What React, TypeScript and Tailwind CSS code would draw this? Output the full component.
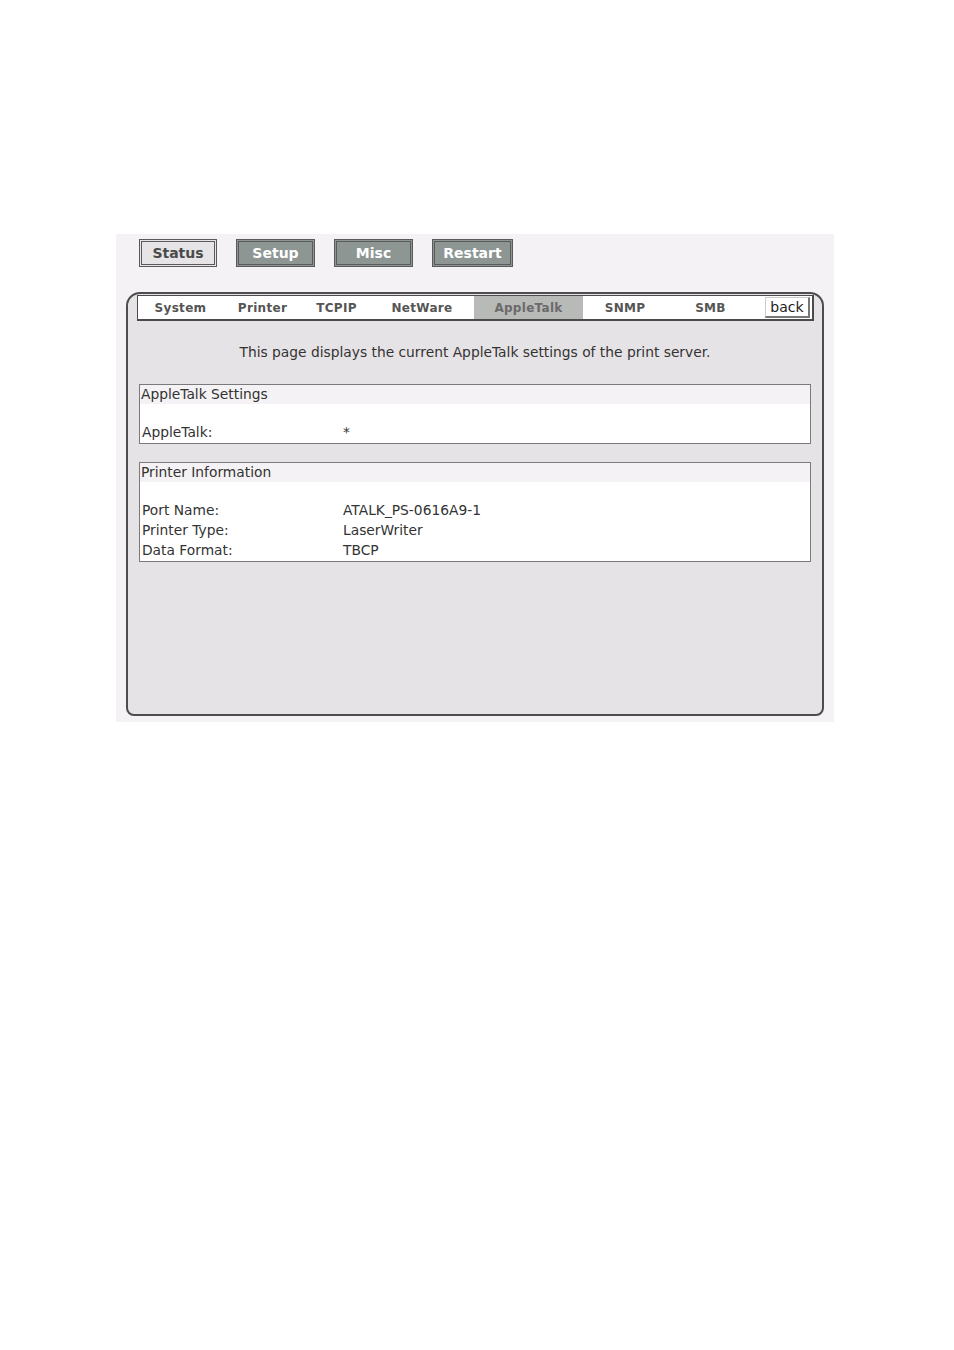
import React from 'react'

const font = { fontFamily: '"DejaVu Sans", Verdana, sans-serif' }

const topButtons = [
  { label: 'Status', w: 'w-[78px]', active: true },
  { label: 'Setup', w: 'w-[79px]', active: false },
  { label: 'Misc', w: 'w-[79px]', active: false },
  { label: 'Restart', w: 'w-[81px]', active: false },
]

const tabs = [
  { label: 'System', w: 'w-[83px]' },
  { label: 'Printer', w: 'w-[81px]' },
  { label: 'TCPIP', w: 'w-[67px]' },
  { label: 'NetWare', w: 'w-[104px]' },
  { label: 'AppleTalk', w: 'w-[109px]', active: true },
  { label: 'SNMP', w: 'w-[84px]' },
  { label: 'SMB', w: 'w-[87px]' },
]

const Section = ({ title, rows }: { title: string; rows: [string, string][] }) => (
  <div className="border border-[#7a7a7a] bg-white">
    <div className="h-[19px] bg-[#f4f2f4] pl-[1px] text-[13.8px] leading-[19px] text-[#333]">{title}</div>
    <div className="pt-[19px]">
      {rows.map(([k, v]) => (
        <div key={k} className="flex h-[20px] items-center text-[13.8px] text-[#333]">
          <div className="w-[203px] pl-[2px]">{k}</div>
          <div>{v}</div>
        </div>
      ))}
    </div>
  </div>
)

export default function App() {
  return (
    <div className="min-h-[1350px] bg-white pt-[234px] pl-[116px]" style={font}>
      <div className="flex h-[488px] w-[718px] flex-col bg-[#f4f2f4]">
        <div className="ml-[23px] mt-[5px] flex gap-[19px]">
          {topButtons.map((b) => (
            <div
              key={b.label}
              className={`${b.w} flex h-[28px] items-center justify-center border-[3px] border-double border-[#5a5a5a] text-[14px] font-bold ${
                b.active ? 'bg-[#e6e4e6] text-[#4a4a4a]' : 'bg-[#8d9693] text-white'
              }`}
            >
              {b.label}
            </div>
          ))}
        </div>

        <div className="ml-[10px] mt-[25px] flex h-[424px] w-[698px] flex-col rounded-t-[14px] rounded-b-[8px] border-2 border-[#4d4d4d] bg-[#e6e3e6]">
          <div className="ml-[9px] mt-[1px] flex h-[26px] w-[677px] items-stretch border border-b-2 border-r-2 border-[#4a4a4a] bg-white pl-[1px]">
            {tabs.map((t) => (
              <div
                key={t.label}
                className={`${t.w} flex items-center justify-center text-[12px] font-bold tracking-[0.3px] ${
                  t.active ? 'bg-[#b8bab8] text-[#6a6a6a]' : 'text-[#555]'
                }`}
              >
                {t.label}
              </div>
            ))}
            <div className="ml-[11px] my-[1px] flex w-[45px] items-center justify-center border border-b-2 border-r-2 border-t-[#ccc] border-l-[#ccc] border-b-[#777] border-r-[#777] bg-white text-[14px] text-[#222]">
              back
            </div>
          </div>

          <div className="mt-[21px] text-center text-[13.8px] text-[#333]">
            This page displays the current AppleTalk settings of the print server.
          </div>

          <div className="mx-[11px] mt-[21px] flex flex-col gap-[18px]">
            <Section title="AppleTalk Settings" rows={[['AppleTalk:', '*']]} />
            <Section
              title="Printer Information"
              rows={[
                ['Port Name:', 'ATALK_PS-0616A9-1'],
                ['Printer Type:', 'LaserWriter'],
                ['Data Format:', 'TBCP'],
              ]}
            />
          </div>
        </div>
      </div>
    </div>
  )
}
